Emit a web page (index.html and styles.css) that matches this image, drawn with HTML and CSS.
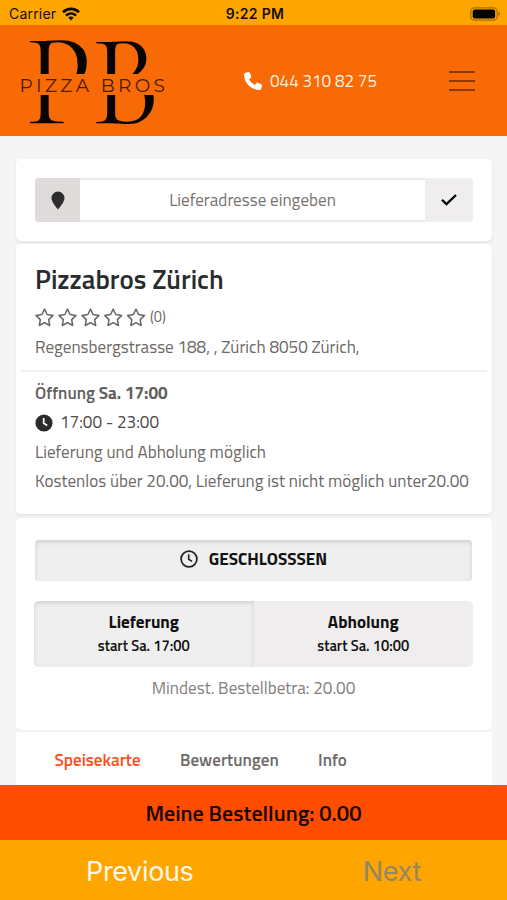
FILE: index.html
```html
<!DOCTYPE html>
<html lang="de">
<head>
<meta charset="utf-8">
<title>Pizzabros Zürich</title>
<link rel="stylesheet" href="styles.css">
</head>
<body>
<div class="status">
  <span class="carrier"><span class="t-carrier">Carrier</span>
    <svg width="18" height="14" viewBox="0 0 18 14" fill="none" stroke="#0a0700" stroke-width="2.6"><path d="M1 5.2C5.6.7 12.4.7 17 5.2"/><path d="M4 8.6c2.9-2.8 7.1-2.8 10 0"/><path d="M6.3 10.6c1.6-1.4 3.8-1.4 5.4 0L9 13.5z" fill="#0a0700" stroke="none"/></svg>
  </span>
  <span class="time">9:22 PM</span>
  <svg class="battery" width="31" height="14" viewBox="0 0 31 14"><rect x=".8" y=".8" width="26.4" height="12.4" rx="3.6" fill="none" stroke="#a86d00" stroke-width="1.2"/><rect x="2.7" y="2.6" width="22.4" height="8.8" rx="2"/><path d="M28.5 4.8c2 .7 2 3.700 0 4.400z" fill="#a86d00"/></svg>
</div>
<header class="header">
  <svg class="logo" width="150" height="90" viewBox="0 0 150 90">
    <g class="monogram"><text x="7" y="87" textLength="67" lengthAdjust="spacingAndGlyphs">P</text><text x="73" y="87" textLength="69" lengthAdjust="spacingAndGlyphs">B</text></g>
    <rect class="band" y="38" width="150" height="21"/>
    <text class="wordmark" x="1.500" y="56" textLength="145.500" lengthAdjust="spacing">PIZZA BROS</text>
  </svg>
  <a class="phone"><svg width="18" height="18" viewBox="0 0 512 512" fill="#fff"><path d="M164.900 24.600c-7.700-18.600-28-28.500-47.400-23.200l-88 24C12.100 30.200 0 46 0 64c0 247.400 200.600 448 448 448 18 0 33.800-12.100 38.600-29.500l24-88c5.300-19.400-4.600-39.700-23.200-47.400l-96-40c-16.300-6.800-35.200-2.100-46.300 11.600L304.700 368C234.300 334.700 177.300 277.700 144 207.300L193.300 167c13.700-11.200 18.400-30 11.600-46.300l-40-96z"/></svg><span>044 310 82 75</span></a>
  <div class="burger"><i></i><i></i><i></i></div>
</header>
<main>
  <section class="card search">
    <div class="field">
      <span class="pin"><svg width="14" height="19" viewBox="0 0 14 19" fill="#2d2d2d"><path d="M7 .5A6.500 6.500 0 0 1 13.500 7C13.500 10.500 9.500 15.500 7 18.500 4.500 15.500.5 10.500.5 7A6.500 6.500 0 0 1 7 .5z"/></svg></span>
      <span class="address">Lieferadresse eingeben</span>
      <span class="ok"><svg width="16" height="12" viewBox="0 0 16 12" fill="none" stroke="#000" stroke-width="2.300"><path d="M1 5.800l4.500 4.400L15 1"/></svg></span>
    </div>
  </section>
  <section class="card info">
    <h1><span>Pizzabros Zürich</span></h1>
    <div class="rating">
      <svg width="111" height="19" viewBox="0 0 111 19" fill="none" stroke="#666" stroke-width="1.500" stroke-linejoin="round"><defs><path id="star" d="M9.500 1.200l2.600 5.300 5.900.9-4.300 4.200 1 5.900-5.200-2.800-5.200 2.800 1-5.900L1 7.400l5.900-.9z"/></defs><use href="#star"/><use href="#star" x="23"/><use href="#star" x="46"/><use href="#star" x="68.700"/><use href="#star" x="91.500"/></svg>
      <span class="count">(0)</span>
    </div>
    <p class="street">Regensbergstrasse 188, , Zürich 8050 Zürich,</p>
    <hr>
    <p class="opening"><span>Öffnung</span> <b>Sa. 17:00</b></p>
    <p class="hours"><svg width="18" height="18" viewBox="0 0 18 18"><circle cx="9" cy="9" r="8.600" fill="#2b2b2b"/><path d="M8.700 4v5.300l3.500 2.200" fill="none" stroke="#fff" stroke-width="1.700"/></svg><span>17:00 - 23:00</span></p>
    <p class="modes">Lieferung und Abholung möglich</p>
    <p class="costs">Kostenlos über 20.00, Lieferung ist nicht möglich unter20.00</p>
  </section>
  <section class="card order">
    <div class="closed"><svg width="18" height="18" viewBox="0 0 18 18" fill="none" stroke="#222"><circle cx="9" cy="9" r="7.900" stroke-width="1.700"/><path d="M8.700 4.200v5l3.300 2.100" stroke-width="1.600"/></svg><span>GESCHLOSSSEN</span></div>
    <div class="switch">
      <div class="option active"><strong>Lieferung</strong><small>start Sa. 17:00</small></div>
      <div class="option"><strong class="pickup">Abholung</strong><small>start Sa. 10:00</small></div>
    </div>
    <p class="minimum">Mindest. Bestellbetra: 20.00</p>
  </section>
  <nav class="tabs"><a class="current">Speisekarte</a><a class="reviews">Bewertungen</a><a class="about">Info</a></nav>
</main>
<div class="basket"><span>Meine Bestellung: 0.00</span></div>
<footer class="pager"><span class="prev">Previous</span><span class="next">Next</span></footer>
</body>
</html>
```
FILE: styles.css
```css
* { box-sizing: border-box; }
body { margin: 0; width: 507px; height: 900px; overflow: hidden; display: flex; flex-direction: column; background: #f5f5f5; font-family: "Titillium Web", "Noto Sans", sans-serif; font-size: 17.100px; color: #6d6966; }
p, h1 { margin: 0; white-space: nowrap; }
svg { flex: none; display: block; }
.status { height: 25px; flex: none; background: #ffa500; display: grid; grid-template-columns: 1fr auto 1fr; align-items: center; padding: 2px 6px 0 9px; font-family: Inter, sans-serif; color: #171000; font-size: 14px; }
.t-carrier { letter-spacing: .2px; }
.carrier { display: flex; gap: 6px; align-items: center; }
.time { font-weight: 600; letter-spacing: .3px; }
.battery { justify-self: end; }
.header { height: 111px; flex: none; background: #f76a05; display: flex; align-items: center; padding: 0 32px 0 18px; }
.logo { overflow: visible; }
.monogram { font: 400 132px "Cormorant Garamond", "Playfair Display", "Liberation Serif", serif; fill: #080400; }
.band { fill: #f76a05; }
.wordmark { font: 18.500px Montserrat, Inter, sans-serif; fill: #4a1c00; }
.phone { display: flex; align-items: center; gap: 8px; margin-left: 76px; color: #fff0df; line-height: 26px; }
.phone span { margin-top: 1px; }
.burger { margin-left: auto; width: 26px; display: grid; gap: 7px; }
.burger i { height: 2px; background: #8c3900; }
main { flex: none; height: 649px; padding: 23px 15px 0 16px; overflow: hidden; }
.card { background: #fff; border-radius: 5px; box-shadow: 0 2px 3px #e4e4e4; }
.search { height: 82px; padding: 19px 19px 0; margin-bottom: 3px; }
.field { height: 44px; display: flex; border-radius: 4px; overflow: hidden; background: #fff; box-shadow: inset 0 0 0 2px #ebe9e9; }
.pin { width: 45px; background: #dfdbda; display: grid; place-items: center; }
.address { flex: 1; text-align: center; line-height: 45px; color: #777370; }
.ok { width: 48px; background: #efedee; display: grid; place-items: center; }
.info { height: 270px; padding: 17px 19px 0; margin-bottom: 4px; }
h1 { font-size: 26.900px; font-weight: 600; line-height: 37px; color: #2a2b2c; }
.rating { display: flex; gap: 4px; align-items: center; height: 36px; margin-top: 1px; }
.count { font-size: 14.500px; }
.street { line-height: 24px; }
hr { border: 0; height: 2px; background: #efefef; margin: 11px -14px 0; }
.opening, .hours, .modes, .costs { line-height: 29.300px; }
.opening { margin-top: 7px; font-weight: 600; color: #625f5d; }
.opening b { font-weight: 700; }
.hours { display: flex; align-items: center; gap: 7px; color: #4c4a49; }
.order { height: 212px; padding: 22px 20px 0 19px; margin-bottom: 2px; box-shadow: 0 1px 2px #ececec; }
.closed { height: 41px; padding-bottom: 3px; display: flex; justify-content: center; align-items: center; gap: 11px; border-radius: 4px; background: #efefef; box-shadow: inset 0 2px 4px #cfcfcf; color: #111; font-weight: 700; }
.switch { display: flex; height: 66px; margin: 20px -1px 0; border-radius: 5px; overflow: hidden; background: #efedee; }
.option { flex: 1; display: flex; flex-direction: column; align-items: center; padding-top: 9px; color: #111; }
.option.active { background: #efefef; box-shadow: inset 0 2px 4px #cfcfcf; }
.option strong { font-weight: 700; line-height: 24px; }
.option small { font-size: 14.700px; font-weight: 600; line-height: 24px; }
.minimum { text-align: center; line-height: 43px; color: #83807d; }
.tabs { height: 53px; background: #fff; display: flex; padding: 0 0 0 38.500px; gap: 39.300px; line-height: 57px; font-weight: 600; color: #6e6b69; }
.current { color: #f7521b; }
.basket { height: 55px; flex: none; background: #ff4d00; display: flex; justify-content: center; align-items: center; color: #190700; font-size: 22px; font-weight: 600; }
.pager { height: 60px; flex: none; background: #ffa500; font-family: Inter, sans-serif; font-size: 27px; letter-spacing: -.35px; line-height: 63px; display: flex; padding-left: 86px; justify-content: space-between; padding-right: 86px; }
.prev { color: #fff8e8; }
.next { color: #92866b; }
```
